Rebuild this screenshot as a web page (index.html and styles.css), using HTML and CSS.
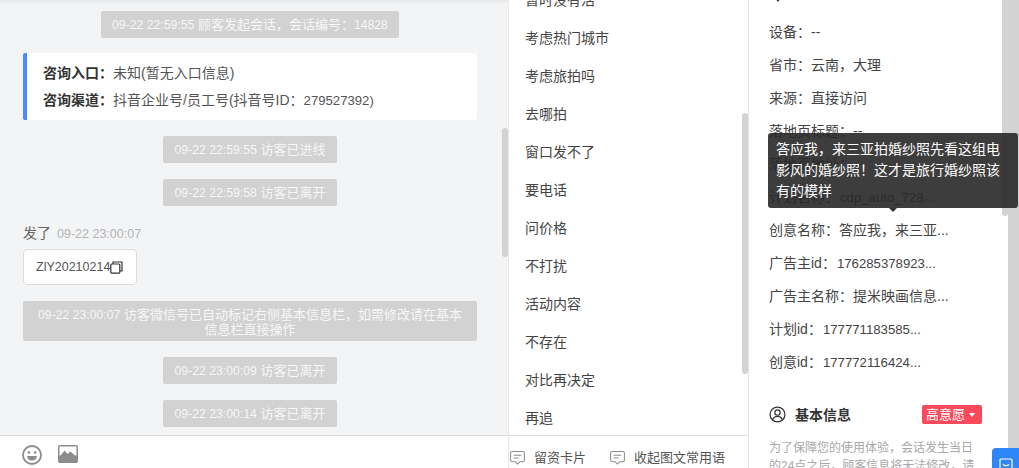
FILE: index.html
```html
<!DOCTYPE html>
<html lang="zh">
<head>
<meta charset="utf-8">
<title>会话</title>
<link rel="stylesheet" href="styles.css">
</head>
<body>
<div class="app">
  <section class="chat">
    <div class="log">
      <div class="sys sys-first"><span class="num">09-22 22:59:55</span> 顾客发起会话，会话编号：<span class="num">14828</span></div>
      <div class="entry">
        <p><b>咨询入口：</b>未知(暂无入口信息)</p>
        <p><b>咨询渠道：</b>抖音企业号/员工号(抖音号ID：<span class="num">279527392)</span></p>
      </div>
      <div class="sys"><span class="num">09-22 22:59:55</span> 访客已进线</div>
      <div class="sys"><span class="num">09-22 22:59:58</span> 访客已离开</div>
      <div class="sender">发了<span>09-22 23:00:07</span></div>
      <div class="code">ZlY20210214<svg width="13" height="13" viewBox="0 0 13 13" fill="none" stroke="#333" stroke-width="1.2"><rect x="0.8" y="3" width="9" height="9.2" rx="1"/><path d="M3 3V1h9v9h-2"/></svg></div>
      <div class="sys sys-wide"><span class="num">09-22 23:00:07</span> 访客微信号已自动标记右侧基本信息栏，如需修改请在基本信息栏直接操作</div>
      <div class="sys"><span class="num">09-22 23:00:09</span> 访客已离开</div>
      <div class="sys"><span class="num">09-22 23:00:14</span> 访客已离开</div>
    </div>
    <div class="thumb thumb-chat"></div>
    <div class="tools">
      <svg width="20" height="20" viewBox="0 0 20 20" fill="none" stroke="#8c8c8c" stroke-width="1.8"><circle cx="10" cy="10" r="9"/><circle cx="6.8" cy="7.5" r="1.3" fill="#8c8c8c" stroke="none"/><circle cx="13.2" cy="7.5" r="1.3" fill="#8c8c8c" stroke="none"/><path d="M5 11h10c-.4 3-2.400 4.500-5 4.500S5.400 14 5 11z" fill="#8c8c8c" stroke="none"/></svg>
      <svg width="20" height="18" viewBox="0 0 20 18"><rect x="0" y="0" width="20" height="18" rx="2" fill="#8c8c8c"/><rect x="1.500" y="1.500" width="17" height="9" fill="#fff"/><path d="M1.500 12l5-6.500 3 3.500 3-2.500 6 5.500v4h-17z" fill="#8c8c8c"/></svg>
    </div>
  </section>
  <section class="phrases">
    <ul class="list">
      <li>暂时没有活</li>
      <li>考虑热门城市</li>
      <li>考虑旅拍吗</li>
      <li>去哪拍</li>
      <li>窗口发不了</li>
      <li>要电话</li>
      <li>问价格</li>
      <li>不打扰</li>
      <li>活动内容</li>
      <li>不存在</li>
      <li>对比再决定</li>
      <li>再追</li>
    </ul>
    <div class="thumb thumb-list"></div>
    <div class="actions">
      <span class="action"><svg width="15" height="14" viewBox="0 0 16 15" fill="none" stroke="#8c8c8c" stroke-width="1.100"><path d="M2 .6h12a1.400 1.400 0 0 1 1.400 1.400v8a1.400 1.400 0 0 1-1.400 1.400h-3.500L8 14l-2.500-2.600H2A1.400 1.400 0 0 1 .6 10V2A1.400 1.400 0 0 1 2 .6z"/><path d="M4 4.500h8M4 7.500h5"/></svg>留资卡片</span>
      <span class="action"><svg width="15" height="14" viewBox="0 0 16 15" fill="none" stroke="#8c8c8c" stroke-width="1.100"><path d="M2 .6h12a1.400 1.400 0 0 1 1.400 1.400v8a1.400 1.400 0 0 1-1.400 1.400h-3.500L8 14l-2.500-2.600H2A1.400 1.400 0 0 1 .6 10V2A1.400 1.400 0 0 1 2 .6z"/><path d="M4 4.500h8M4 7.500h5"/></svg>收起图文常用语</span>
    </div>
  </section>
  <aside class="info">
    <span class="clip-caret"></span>
    <dl class="fields">
      <div><dt>设备：</dt><dd>--</dd></div>
      <div><dt>省市：</dt><dd>云南，大理</dd></div>
      <div><dt>来源：</dt><dd>直接访问</dd></div>
      <div><dt>落地页标题：</dt><dd>--</dd></div>
      <div><dt>落地页地址：</dt><dd>--</dd></div>
      <div><dt>计划名称：</dt><dd class="num">cdp_auto_728...</dd></div>
      <div><dt>创意名称：</dt><dd>答应我，来三亚...</dd></div>
      <div><dt>广告主id：</dt><dd class="num">176285378923...</dd></div>
      <div><dt>广告主名称：</dt><dd>提米映画信息...</dd></div>
      <div><dt>计划id：</dt><dd class="num">177771183585...</dd></div>
      <div><dt>创意id：</dt><dd class="num">177772116424...</dd></div>
    </dl>
    <div class="basic">
      <h3><svg width="17" height="17" viewBox="0 0 18 18" fill="none" stroke="#333" stroke-width="1.300"><circle cx="9" cy="9" r="7.900"/><circle cx="9" cy="7" r="2.800"/><path d="M3.800 14.500c1-2.400 3-3.500 5.200-3.500s4.200 1.100 5.200 3.500"/></svg>基本信息</h3>
      <span class="tag">高意愿</span>
    </div>
    <p class="note">为了保障您的使用体验，会话发生当日的24点之后，顾客信息将无法修改，请</p>
    <div class="thumb thumb-info"></div>
  </aside>
  <div class="track"></div>
</div>
<div class="tooltip">答应我，来三亚拍婚纱照先看这组电影风的婚纱照！这才是旅行婚纱照该有的模样</div>
<div class="float"><svg width="14" height="14" viewBox="0 0 14 14" fill="none" stroke="#fff" stroke-width="1.200"><rect x="1" y="1" width="12" height="12" rx="1"/><path d="M4 6.500c1.500 1.500 4.500 1.500 6 0"/></svg></div>
</body>
</html>
```
FILE: styles.css
```css
* { box-sizing: border-box; }
html, body { margin: 0; height: 100%; overflow: hidden; }
body {
  position: relative;
  font-family: "Liberation Sans", "Noto Sans CJK SC", sans-serif;
  font-size: 14px;
  color: #333;
  background: #fff;
}
.app { display: flex; height: 468px; }
.num { font-size: .94em; }

.chat {
  position: relative;
  width: 509px;
  flex: none;
  display: flex;
  flex-direction: column;
  background: #f3f4f6;
  border-right: 1px solid #e8e8e8;
  box-shadow: inset 0 4px 4px -3px rgba(0,0,0,.08);
}
.log {
  height: 435px;
  flex: none;
  overflow: hidden;
  padding: 11px 31px 0 23px;
  display: flex;
  flex-direction: column;
  align-items: center;
}
.log > * { flex: none; }
.sys {
  width: 174px;
  height: 27px;
  padding: 6px 0;
  margin-bottom: 16px;
  border-radius: 2px;
  background: #d1d2d1;
  color: #f7f7f7;
  font-size: 13px;
  line-height: 15px;
  text-align: center;
  white-space: nowrap;
}
.sys-first { width: 298px; margin-bottom: 15px; }
.sys-wide {
  width: 454px;
  height: 40px;
  padding: 7px 12px;
  line-height: 13.500px;
  white-space: normal;
}
.entry {
  align-self: stretch;
  height: 67px;
  margin-bottom: 16px;
  padding: 0 0 0 16px;
  border-left: 4px solid #4b8bff;
  border-radius: 2px;
  background: #fff;
  color: #555;
}
.entry p { margin: 0; height: 27px; line-height: 27px; white-space: nowrap; }
.entry p:first-child { margin-top: 7px; }
.entry b { color: #333; font-weight: 700; }
.sender {
  align-self: flex-start;
  height: 18px;
  line-height: 18px;
  margin: 2px 0 7px;
  color: #666;
}
.sender span { margin-left: 6px; color: #b4b4b4; font-size: 12.500px; }
.code {
  align-self: flex-start;
  display: flex;
  align-items: center;
  width: 114px;
  height: 36px;
  margin-bottom: 16px;
  padding-left: 12px;
  background: #fff;
  border: 1px solid #dcdcdc;
  border-radius: 4px;
  color: #555;
  font-size: 12.500px;
}
.tools {
  height: 33px;
  flex: none;
  display: flex;
  align-items: flex-start;
  gap: 16px;
  padding: 9px 0 0 22px;
  background: #fff;
  border-top: 1px solid #dcdcdc;
}

.thumb { position: absolute; width: 6px; border-radius: 3px; background: #d3d3d3; }
.thumb-chat { left: 502px; top: 128px; height: 129px; }
.thumb-list { left: 233px; top: 113px; height: 261px; }
.thumb-info { left: 253px; top: -10px; height: 226px; }

.phrases {
  position: relative;
  width: 240px;
  flex: none;
  display: flex;
  flex-direction: column;
  border-right: 1px solid #e4e4e4;
}
.list {
  height: 435px;
  flex: none;
  margin: 0;
  padding: 0 0 0 16px;
  overflow: hidden;
  list-style: none;
}
.list li { height: 38px; line-height: 38px; color: #444; }
.list li:first-child { margin-top: -19px; }
.actions {
  height: 33px;
  flex: none;
  display: flex;
  align-items: flex-start;
  gap: 24px;
  padding: 14px 0 0 1px;
  border-top: 1px solid #dcdcdc;
  color: #555;
  font-size: 13px;
  line-height: 16px;
  white-space: nowrap;
}
.action { display: flex; align-items: center; gap: 9px; }

.info {
  position: relative;
  width: 259px;
  flex: none;
  padding-left: 20px;
  overflow: hidden;
}
.clip-caret {
  position: absolute;
  left: 26px;
  top: -2px;
  border: 3px solid transparent;
  border-top: 4px solid #333;
  border-bottom: 0;
}
.fields { margin: 0; padding-top: 16px; }
.fields > div { display: flex; height: 33px; line-height: 33px; white-space: nowrap; }
.fields dt { color: #444; }
.fields dd { margin: 0; color: #444; }
.fields dd.num { margin-left: 1px; font-size: 13.200px; }
.basic {
  display: flex;
  align-items: center;
  justify-content: space-between;
  width: 213px;
  margin-top: 25px;
  height: 20px;
}
.basic h3 {
  display: flex;
  align-items: center;
  gap: 9px;
  margin: 0;
  font-size: 14px;
  font-weight: 700;
  color: #333;
}
.tag {
  position: relative;
  width: 60px;
  height: 19px;
  padding-left: 4px;
  font-size: 13px;
  line-height: 19px;
  background: #f94a5c;
  border-radius: 2px;
  color: #fff;
}
.tag::after {
  content: "";
  position: absolute;
  right: 7px;
  top: 8px;
  border: 3.500px solid transparent;
  border-top: 4px solid #fff;
  border-bottom: 0;
}
.note {
  width: 208px;
  margin: 15px 0 0;
  color: #a8a8a8;
  font-size: 12px;
  line-height: 18px;
}
.track { flex: 1; background: #d3d3d3; }

.tooltip {
  position: absolute;
  left: 768px;
  top: 133px;
  width: 250px;
  height: 75px;
  padding: 6px 8px;
  background: rgba(40,40,40,.9);
  border-radius: 3px;
  color: #fff;
  line-height: 21px;
}
.tooltip::after {
  content: "";
  position: absolute;
  left: 121px;
  bottom: -4px;
  border: 4px solid transparent;
  border-top-color: #333;
  border-bottom: 0;
}
.float {
  position: absolute;
  left: 992px;
  top: 448px;
  width: 40px;
  height: 40px;
  padding: 10px 0 0 7px;
  background: #2f86f6;
  border-radius: 4px 0 0 0;
}
```
